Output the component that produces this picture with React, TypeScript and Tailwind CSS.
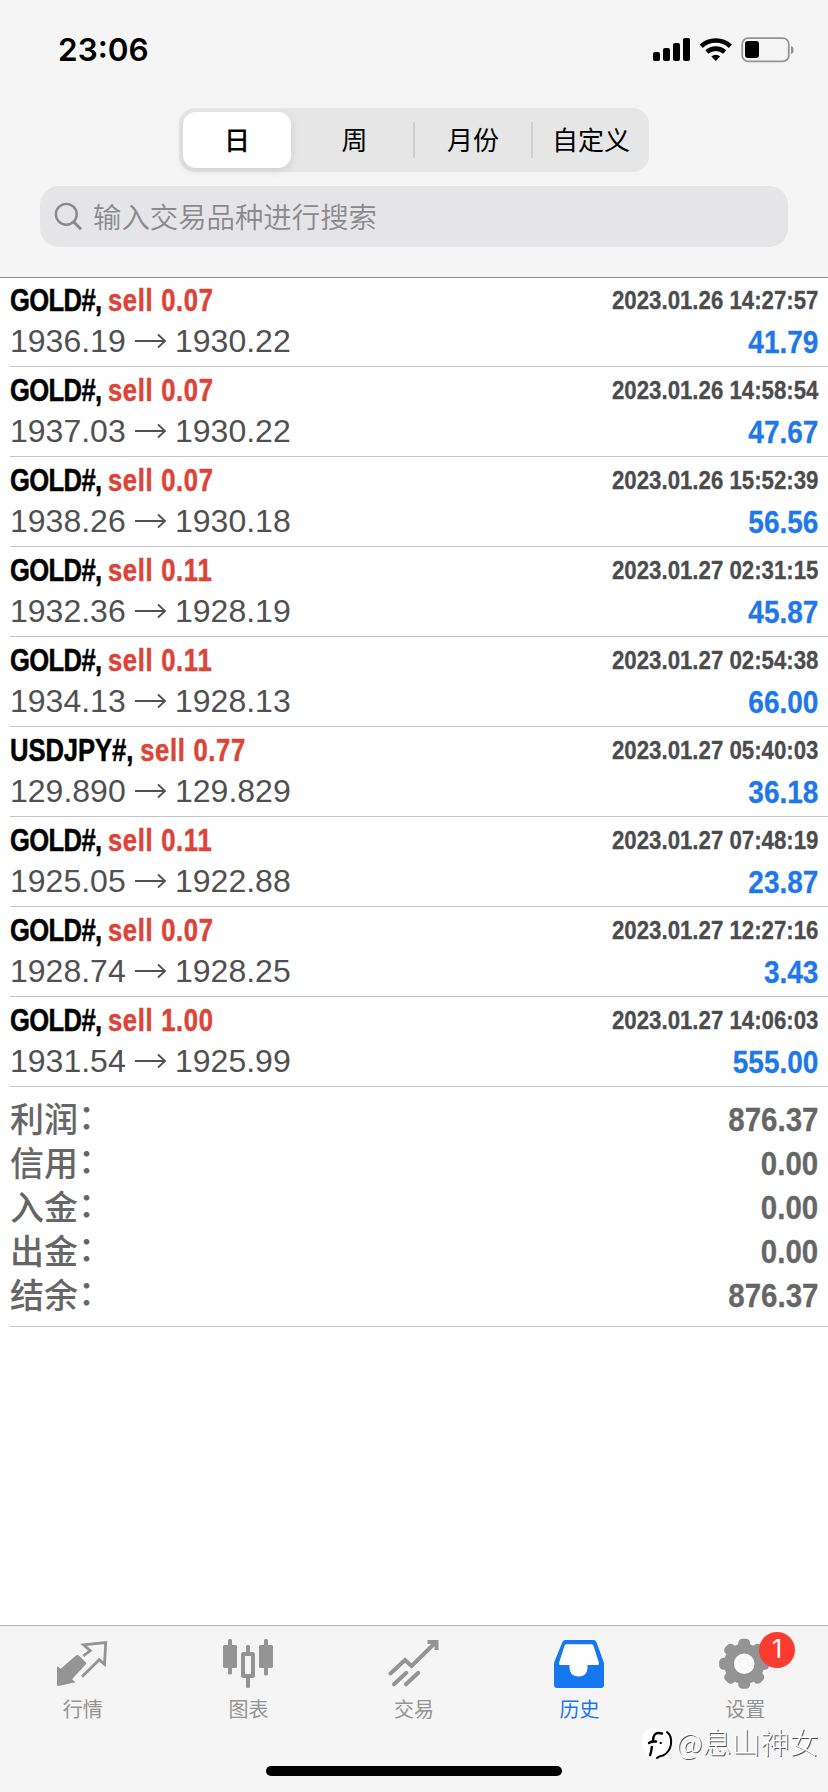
import type { ReactNode } from "react"

const deals = [
  { symbol: "GOLD#", volume: "0.07", open: "1936.19", close: "1930.22", time: "2023.01.26 14:27:57", profit: "41.79" },
  { symbol: "GOLD#", volume: "0.07", open: "1937.03", close: "1930.22", time: "2023.01.26 14:58:54", profit: "47.67" },
  { symbol: "GOLD#", volume: "0.07", open: "1938.26", close: "1930.18", time: "2023.01.26 15:52:39", profit: "56.56" },
  { symbol: "GOLD#", volume: "0.11", open: "1932.36", close: "1928.19", time: "2023.01.27 02:31:15", profit: "45.87" },
  { symbol: "GOLD#", volume: "0.11", open: "1934.13", close: "1928.13", time: "2023.01.27 02:54:38", profit: "66.00" },
  { symbol: "USDJPY#", volume: "0.77", open: "129.890", close: "129.829", time: "2023.01.27 05:40:03", profit: "36.18" },
  { symbol: "GOLD#", volume: "0.11", open: "1925.05", close: "1922.88", time: "2023.01.27 07:48:19", profit: "23.87" },
  { symbol: "GOLD#", volume: "0.07", open: "1928.74", close: "1928.25", time: "2023.01.27 12:27:16", profit: "3.43" },
  { symbol: "GOLD#", volume: "1.00", open: "1931.54", close: "1925.99", time: "2023.01.27 14:06:03", profit: "555.00" },
]

const totals = [
  { label: "利润", value: "876.37" },
  { label: "信用", value: "0.00" },
  { label: "入金", value: "0.00" },
  { label: "出金", value: "0.00" },
  { label: "结余", value: "876.37" },
]

function StatusBar() {
  return (
    <div className="flex h-[108px] items-start justify-between pl-[58px] pr-[32px] pt-[32px]">
      <span className="font-['Inter',sans-serif] text-[31.5px] font-semibold leading-[36px]">23:06</span>
      <svg width="143" height="28" viewBox="0 0 143 28" className="mt-[3px]">
        <g>
          <rect x="0" y="17" width="7" height="9" rx="2" />
          <rect x="10" y="13" width="7" height="13" rx="2" />
          <rect x="20" y="8" width="7" height="18" rx="2" />
          <rect x="30" y="3" width="7" height="23" rx="2" />
        </g>
        <g fill="none" stroke="#000" strokeWidth="4.6">
          <path d="M48.2 11.2a21.6 21.6 0 0 1 29.2 0" />
          <path d="M53.9 17a13.3 13.3 0 0 1 17.8 0" />
        </g>
        <path d="M58.4 21.4a6.6 6.6 0 0 1 8.8 0L62.8 26z" />
        <rect x="89.2" y="3.2" width="46.6" height="23.2" rx="6" fill="none" stroke="#939393" strokeWidth="1.8" />
        <rect x="92" y="6" width="14" height="17" rx="3" />
        <path d="M138 11c3.6 1 3.6 7 0 8z" fill="#939393" />
      </svg>
    </div>
  )
}

function Segments() {
  return (
    <div className="mx-auto flex h-[64px] w-[470px] items-center rounded-[16px] bg-[#e6e6e6] text-[26px]">
      <div className="flex h-[64px] w-[117px] items-center pl-[4px]">
        <div className="flex h-[56px] w-[108px] items-center justify-center rounded-[13px] bg-white pb-[3px] font-medium shadow-[0_3px_8px_rgba(0,0,0,0.1)]">
          日
        </div>
      </div>
      <div className="flex-1 pb-[3px] text-center">周</div>
      <div className="h-[36px] w-[2px] bg-[#cfcfd0]" />
      <div className="w-[116px] pb-[3px] text-center">月份</div>
      <div className="h-[36px] w-[2px] bg-[#cfcfd0]" />
      <div className="w-[116px] pb-[3px] text-center">自定义</div>
    </div>
  )
}

function Header() {
  return (
    <header className="relative z-10 h-[278px] border-b border-[#8b8b8b] bg-[#f5f5f5]">
      <StatusBar />
      <Segments />
      <div className="mx-[40px] mt-[14px] flex h-[61px] items-center rounded-[19px] bg-[#e5e5e7] pl-[14px] text-[#8a8a8d]">
        <svg width="30" height="30" viewBox="0 0 30 30" fill="none" stroke="currentColor" strokeWidth="2.4">
          <circle cx="12.3" cy="12.3" r="10.4" />
          <path d="M19.6 19.8l7.4 7.4" strokeWidth="3" />
        </svg>
        <span className="pl-[9px] text-[28.4px] font-[350]">输入交易品种进行搜索</span>
      </div>
    </header>
  )
}

function Deal({ deal }: { deal: (typeof deals)[number] }) {
  return (
    <div className="ml-[10px] flex h-[90px] justify-between border-b border-[#c4c4c6] pr-[10px] font-['Liberation_Sans',sans-serif]">
      <div className="w-[400px]">
        <div className="mt-[5px] origin-left scale-x-[0.8] whitespace-pre text-[32px] font-bold leading-[36px] [-webkit-text-stroke:0.5px]">
          <span className={deal.symbol.length > 5 ? "tracking-[-0.1px]" : "tracking-[-0.8px]"}>{deal.symbol}, </span>
          <span className="tracking-[0.85px] text-[#dd4337]">sell {deal.volume}</span>
        </div>
        <div className="mt-[5px] flex items-center text-[32px] leading-[36px] text-[#505052]">
          <span className="w-[125px]">{deal.open}</span>
          <svg width="33" height="16" viewBox="0 0 33 16" fill="none" stroke="currentColor" strokeWidth="1.8">
            <path d="M0 8h30M23 1.5L30 8l-7 6.5" />
          </svg>
          <span className="pl-[7px]">{deal.close}</span>
        </div>
      </div>
      <div className="text-right font-bold">
        <div className="mt-[7px] origin-right scale-x-[0.855] text-[26px] leading-[32px] text-[#4c4c4e] [-webkit-text-stroke:0.3px]">{deal.time}</div>
        <div className="mt-[8px] origin-right scale-x-[0.875] text-[32px] leading-[36px] text-[#1f78ea] [-webkit-text-stroke:0.3px]">{deal.profit}</div>
      </div>
    </div>
  )
}

function Tab({ label, active, children }: { label: string; active?: boolean; children: ReactNode }) {
  return (
    <div className={active ? "flex flex-1 flex-col items-center text-[#1677f0]" : "flex flex-1 flex-col items-center text-[#949494]"}>
      <div className="relative mt-[12px] h-[52px] w-[52px]">{children}</div>
      <span className="mt-[4px] text-[20px] leading-[30px]">{label}</span>
    </div>
  )
}

function TabBar() {
  return (
    <nav className="relative flex h-[167px] border-t border-[#b3b3b5] bg-[#f5f5f5]">
      <Tab label="行情">
        <svg width="52" height="52" viewBox="0 0 52 52">
          <path d="M0 28l3.7 2.7L19 17.4q1.5-1 2.8.2l6.8 6.6q1 1.2 0 2.4L15 41.3l3.6 3L1.5 48Q0 48 0 46.5z" fill="currentColor" />
          <path d="M26.3 18l6.9-5.4-6.7-5.8 22.2-2.3-1.2 21.8-5.2-4.6L25 38.7" fill="none" stroke="currentColor" strokeWidth="2.8" />
        </svg>
      </Tab>
      <Tab label="图表">
        <svg width="52" height="52" viewBox="0 0 52 52" fill="currentColor">
          <rect x="6" y="1" width="4" height="35.5" rx="1.5" />
          <rect x="1" y="7" width="14" height="23" rx="1.5" />
          <rect x="24" y="7" width="4" height="10" rx="1.5" />
          <rect x="24" y="38" width="4" height="12" rx="1.5" />
          <rect x="21" y="16" width="10" height="22" rx="0.5" fill="none" stroke="currentColor" strokeWidth="4" />
          <rect x="42" y="1" width="4" height="36.5" rx="1.5" />
          <rect x="37" y="7" width="14" height="23" rx="1.5" />
        </svg>
      </Tab>
      <Tab label="交易">
        <svg width="52" height="52" viewBox="0 0 52 52" fill="none" stroke="currentColor" strokeWidth="4" strokeLinecap="round">
          <path d="M2.5 35.5L17 22l6.6 6L47 5" />
          <path d="M39.5 4h9v8" strokeLinecap="butt" />
          <path d="M6 46.3l12.3-11.5M18 46.3l12.3-11.5" />
        </svg>
      </Tab>
      <Tab label="历史" active>
        <svg width="52" height="52" viewBox="0 0 52 52">
          <path d="M11.5 2h28q2.2 0 3 2.2L49.3 23q.7 1.7.7 3v21q0 3-3 3H3q-3 0-3-3V26q0-1.3.7-3L8.3 4.2Q9.2 2 11.500 2z" fill="currentColor" />
          <path d="M12.5 6.3h25q1.5 0 2 1.5L44.8 24.5q.6 2.5-1 2.5H33.5v2.5q0 9-9 9t-9-9V27H6.2q-1.600 0-1-2.500L10.5 7.800q.5-1.500 2-1.500z" fill="#fff" />
        </svg>
      </Tab>
      <Tab label="设置">
        <svg width="52" height="52" viewBox="0 0 52 52">
          <g transform="translate(25.2 25.7)" fill="currentColor">
            <circle r="20.3" />
            <rect x="-6" y="-25" width="12" height="50" rx="4.5" />
            <rect x="-6" y="-25" width="12" height="50" rx="4.5" transform="rotate(45)" />
            <rect x="-6" y="-25" width="12" height="50" rx="4.5" transform="rotate(90)" />
            <rect x="-6" y="-25" width="12" height="50" rx="4.5" transform="rotate(135)" />
            <circle r="10.3" fill="#fcfcfc" />
            <circle r="5" fill="none" stroke="#f0f0f0" />
          </g>
        </svg>
        <div className="absolute left-[40px] top-[-6px] flex h-[36px] w-[36px] items-center justify-center rounded-full bg-[#fc3b30] font-['Inter',sans-serif] text-[25px] text-white">
          1
        </div>
      </Tab>
      <div className="absolute bottom-[16px] left-[266px] h-[10px] w-[296px] rounded-full bg-black" />
      <div className="absolute left-[642px] top-[95px] flex items-center">
        <svg width="34" height="40" viewBox="0 0 34 40" fill="none" stroke="#000" strokeWidth="2" strokeLinecap="round">
          <rect x="0" y="6" width="29" height="29" rx="12" fill="#fff" stroke="none" />
          <path d="M20 11.500q-7-2-8.500 3.500-.4 2-.6 5M7 21q3-2.500 7-1.500M9.800 25q-.3 4-1.600 8" strokeWidth="2.400" />
          <path d="M25 10q5 4 4 12t-8 11.500q-4 .5-6 2.500" />
          <path d="M18.500 21h.5" />
        </svg>
        <span className="pb-[1px] text-[29px] font-light leading-[40px] text-white [text-shadow:1px_1px_0_#555]">@息山神女</span>
      </div>
    </nav>
  )
}

export default function App() {
  return (
    <div className="flex h-[1792px] w-[828px] flex-col bg-white font-['Noto_Sans_CJK_SC',sans-serif] text-black">
      <Header />
      <main className="-mt-px flex-1">
        {deals.map((deal) => (
          <Deal key={deal.time} deal={deal} />
        ))}
        <div className="ml-[10px] h-[240px] border-b border-[#c4c4c6] pr-[10px] pt-[10px] text-[#666]">
          {totals.map((row) => (
            <div key={row.label} className="flex h-[44px] items-center justify-between">
              <span className="flex pb-[3px] text-[34px] font-medium leading-[41px]">
                {row.label}
                <span className="-mt-[3px]">：</span>
              </span>
              <span className="origin-right scale-x-[0.88] pt-[2px] font-['Liberation_Sans',sans-serif] text-[33.5px] font-bold [-webkit-text-stroke:0.3px]">
                {row.value}
              </span>
            </div>
          ))}
        </div>
      </main>
      <TabBar />
    </div>
  )
}
